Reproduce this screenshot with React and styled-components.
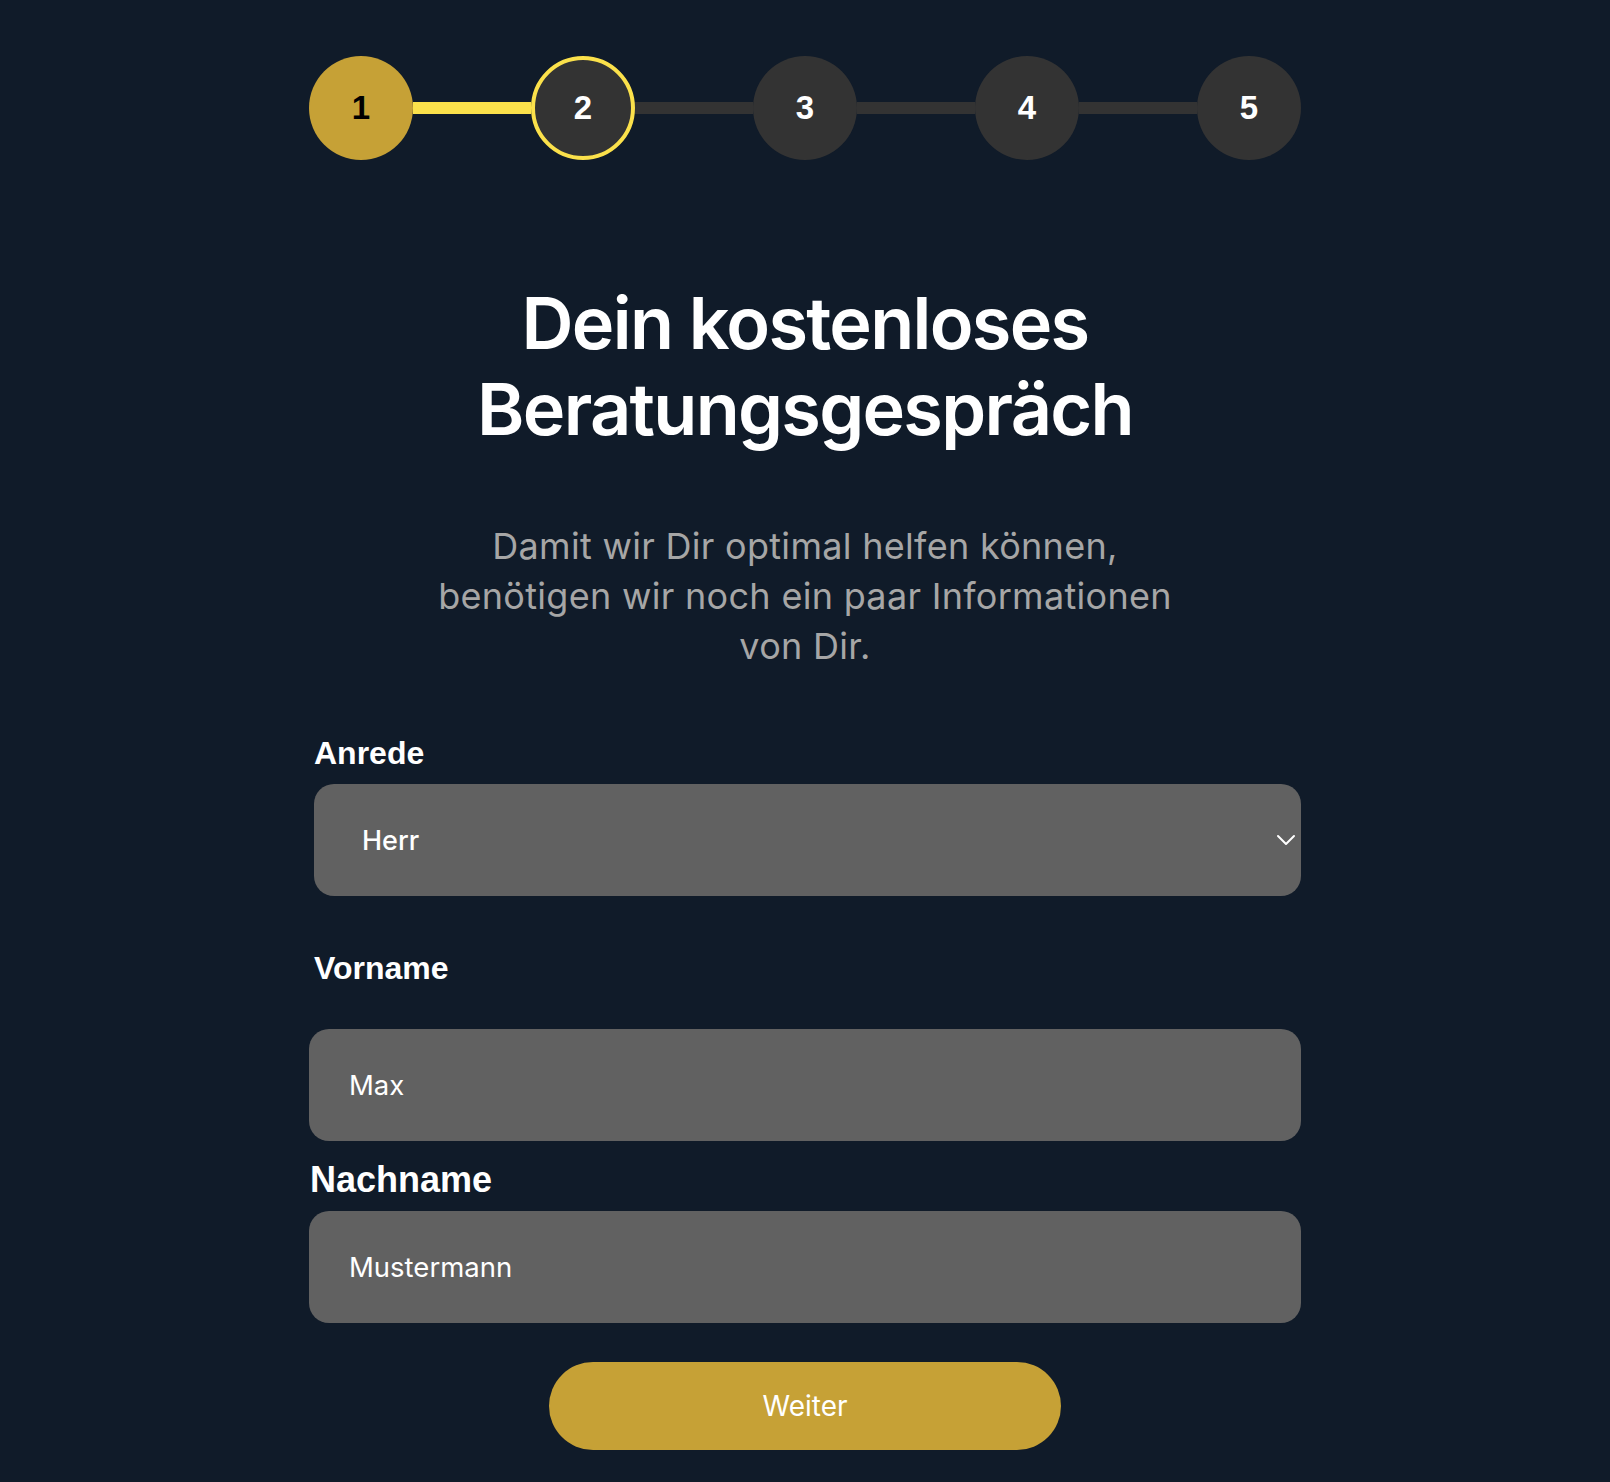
import React from "react";
import styled, { createGlobalStyle } from "styled-components";

const GlobalStyle = createGlobalStyle`
  html, body {
    margin: 0;
    padding: 0;
    background: #101b29;
  }
  body {
    font-family: Inter, "Noto Sans", sans-serif;
    color: #ffffff;
  }
  * { box-sizing: border-box; }
`;

const Page = styled.main`
  width: 992px;
  margin: 0 auto;
  padding: 56px 0 30px;
  display: flex;
  flex-direction: column;
`;

/* ---------- progress stepper ---------- */

const Stepper = styled.ol`
  list-style: none;
  margin: 0;
  padding: 0;
  display: flex;
  align-items: center;
  height: 104px;
`;

const StepCircle = styled.li`
  flex: 0 0 104px;
  width: 104px;
  height: 104px;
  border-radius: 50%;
  display: flex;
  align-items: center;
  justify-content: center;
  font-family: "Liberation Sans", Arial, sans-serif;
  font-weight: 700;
  font-size: 33px;
  background: ${({ $state }) => ($state === "done" ? "#c6a136" : "#333333")};
  color: ${({ $state }) => ($state === "done" ? "#000000" : "#ffffff")};
  border: ${({ $state }) => ($state === "current" ? "4px solid #fbe14b" : "none")};
`;

const Connector = styled.li`
  flex: 1 1 auto;
  height: 12px;
  background: ${({ $active }) => ($active ? "#fbe14b" : "#333333")};
`;

/* ---------- heading ---------- */

const Title = styled.h1`
  margin: 120px 0 0;
  text-align: center;
  font-family: Inter, sans-serif;
  font-weight: 600;
  font-size: 72px;
  line-height: 86px;
  letter-spacing: -1.7px;
  color: #ffffff;
`;

const Intro = styled.p`
  margin: 69px 0 0;
  text-align: center;
  font-family: Inter, sans-serif;
  font-weight: 400;
  font-size: 36px;
  line-height: 50px;
  letter-spacing: 0.3px;
  color: #a6a6a6;
`;

/* ---------- form ---------- */

const Form = styled.form`
  display: flex;
  flex-direction: column;
  margin-top: 64px;
`;

const Label = styled.label`
  display: block;
  font-family: "Liberation Sans", Arial, sans-serif;
  font-weight: 700;
  font-size: ${({ $size }) => $size}px;
  line-height: ${({ $size }) => $size + 4}px;
  margin: ${({ $top }) => $top}px 0 ${({ $bottom }) => $bottom}px ${({ $indent }) => $indent}px;
  color: #ffffff;
`;

const SelectWrap = styled.div`
  position: relative;
  margin-left: 5px;
`;

const Select = styled.select`
  appearance: none;
  -webkit-appearance: none;
  display: block;
  width: 100%;
  height: 112px;
  border: none;
  border-radius: 20px;
  background: #616161;
  color: #ffffff;
  font-family: Inter, sans-serif;
  font-weight: 500;
  font-size: 27px;
  padding: 0 60px 0 48px;
  outline: none;
`;

const Chevron = styled.svg`
  position: absolute;
  right: 5px;
  top: 50%;
  width: 20px;
  height: 12px;
  transform: translateY(-50%);
  pointer-events: none;
`;

const TextInput = styled.input`
  display: block;
  width: 100%;
  height: 112px;
  border: none;
  border-radius: 20px;
  background: #616161;
  color: #ffffff;
  font-family: Inter, sans-serif;
  font-weight: 400;
  font-size: 27.5px;
  padding: 0 40px 0 40px;
  outline: none;
`;

const SubmitButton = styled.button`
  align-self: center;
  margin-top: 39px;
  width: 512px;
  height: 88px;
  border: none;
  border-radius: 44px;
  background: #c6a136;
  color: #ffffff;
  font-family: Inter, sans-serif;
  font-weight: 400;
  font-size: 28px;
  cursor: pointer;
`;

const steps = [1, 2, 3, 4, 5];
const currentStep = 2;

export default function App() {
  return (
    <>
      <GlobalStyle />
      <Page>
        <Stepper>
          {steps.map((n, i) => (
            <React.Fragment key={n}>
              {i > 0 && <Connector $active={n <= currentStep} />}
              <StepCircle
                $state={n < currentStep ? "done" : n === currentStep ? "current" : "todo"}
              >
                {n}
              </StepCircle>
            </React.Fragment>
          ))}
        </Stepper>

        <Title>
          Dein kostenloses
          <br />
          Beratungsgespräch
        </Title>

        <Intro>
          Damit wir Dir optimal helfen können,
          <br />
          benötigen wir noch ein paar Informationen
          <br />
          von Dir.
        </Intro>

        <Form onSubmit={(e) => e.preventDefault()}>
          <Label htmlFor="anrede" $size={32} $top={0} $bottom={13} $indent={5}>
            Anrede
          </Label>
          <SelectWrap>
            <Select id="anrede" defaultValue="Herr">
              <option>Herr</option>
              <option>Frau</option>
              <option>Divers</option>
            </Select>
            <Chevron viewBox="0 0 20 12" fill="none">
              <path d="M2 2l8 8 8-8" stroke="#ffffff" strokeWidth="2" strokeLinecap="round" strokeLinejoin="round" />
            </Chevron>
          </SelectWrap>

          <Label htmlFor="vorname" $size={32} $top={54} $bottom={43} $indent={5}>
            Vorname
          </Label>
          <TextInput id="vorname" defaultValue="Max" />

          <Label htmlFor="nachname" $size={36} $top={19} $bottom={11} $indent={1}>
            Nachname
          </Label>
          <TextInput id="nachname" defaultValue="Mustermann" />

          <SubmitButton type="submit">Weiter</SubmitButton>
        </Form>
      </Page>
    </>
  );
}
